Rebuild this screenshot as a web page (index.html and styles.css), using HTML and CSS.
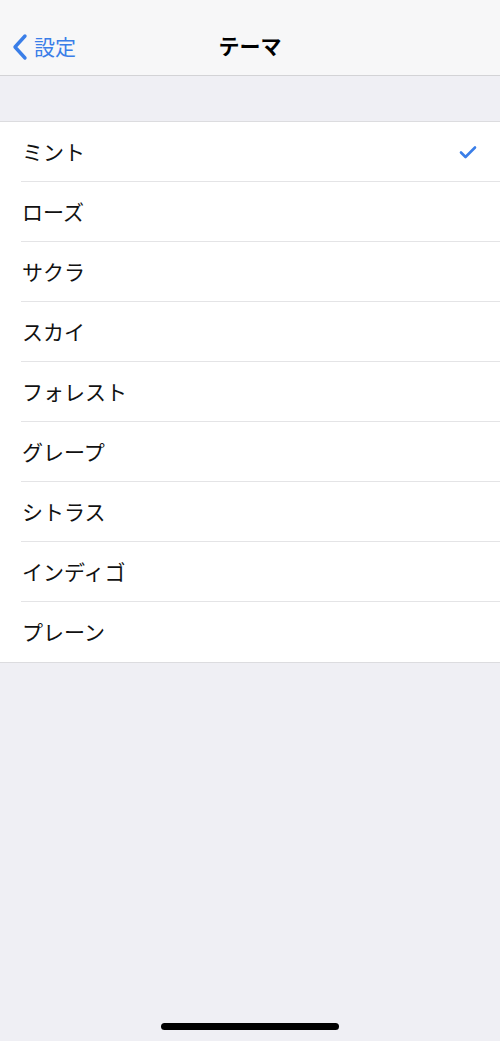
FILE: index.html
```html
<!DOCTYPE html>
<html lang="ja">
<head>
    <meta charset="UTF-8">
    <meta name="viewport" content="width=device-width, initial-scale=1.0">
    <title>テーマ</title>
    <link rel="stylesheet" href="styles.css">
</head>
<body>
    <div class="screen">
        <header class="navbar">
            <a class="back" href="#">
                <svg class="chevron" width="18" height="28" viewBox="0 0 18 28">
                    <path d="M14 3 L4 14 L14 25" fill="none" stroke="#3a7ee8" stroke-width="3.4" stroke-linecap="round" stroke-linejoin="round"/>
                </svg>
                <span>設定</span>
            </a>
            <h1 class="title">テーマ</h1>
        </header>

        <div class="spacer"></div>

        <ul class="list">
            <li class="row">ミント
                <svg class="check" width="20" height="16" viewBox="0 0 20 16">
                    <path d="M3 8.5 L7.5 13 L17 3.5" fill="none" stroke="#3a7ee8" stroke-width="2.6" stroke-linecap="round" stroke-linejoin="round"/>
                </svg>
            </li>
            <li class="row">ローズ</li>
            <li class="row">サクラ</li>
            <li class="row">スカイ</li>
            <li class="row">フォレスト</li>
            <li class="row">グレープ</li>
            <li class="row">シトラス</li>
            <li class="row">インディゴ</li>
            <li class="row">プレーン</li>
        </ul>

        <div class="home-bar"></div>
    </div>
</body>
</html>
```

FILE: styles.css
```css
body {
    margin: 0;
    font-family: "Noto Sans CJK JP", "Noto Sans", sans-serif;
    background: #efeff4;
}
.screen {
    width: 500px;
    height: 1041px;
    display: flex;
    flex-direction: column;
    background: #efeff4;
}
.navbar {
    height: 76px;
    background: #f7f7f8;
    border-bottom: 1px solid #d3d3d6;
    display: flex;
    align-items: center;
    justify-content: center;
    position: relative;
    padding-top: 14px;
    box-sizing: border-box;
}
.back {
    position: absolute;
    left: 11px;
    top: 31px;
    display: flex;
    align-items: center;
    gap: 5px;
    color: #3a7ee8;
    text-decoration: none;
    font-size: 21px;
}
.back .chevron {
    margin-top: 2px;
}
.back span {
    line-height: 28px;
}
.title {
    margin: 0;
    font-size: 21px;
    font-weight: bold;
    color: #000;
    line-height: 28px;
}
.spacer {
    height: 45px;
}
.list {
    list-style: none;
    margin: 0;
    padding: 0 0 0 21px;
    background: #fff;
    border-top: 1px solid #dcdcdf;
    border-bottom: 1px solid #dcdcdf;
}
.row {
    height: 59px;
    display: flex;
    align-items: center;
    justify-content: space-between;
    padding: 0 22px 2px 1px;
    box-sizing: border-box;
    height: 60px;
    border-bottom: 1px solid #e4e4e6;
    font-size: 21px;
    color: #111;
}
.row:last-child {
    border-bottom: none;
    height: 60px;
}
.check {
    margin-top: 2px;
}
.home-bar {
    margin: auto auto 11px;
    width: 178px;
    height: 7px;
    border-radius: 4px;
    background: #000;
}
```
